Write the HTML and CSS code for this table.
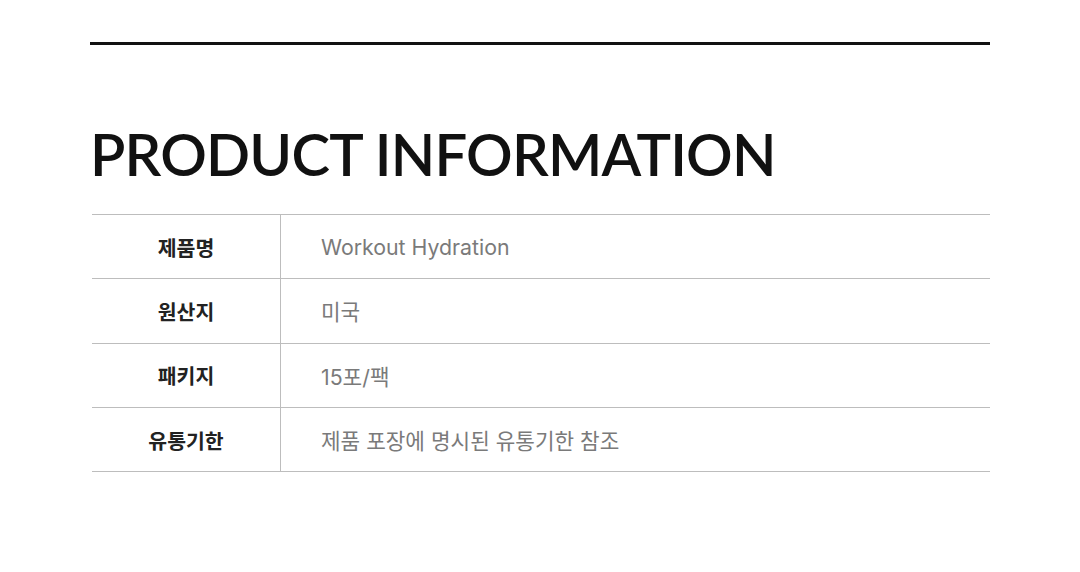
FILE: index.html
```html
<!DOCTYPE html>
<html lang="ko">
<head>
<meta charset="utf-8">
<link rel="stylesheet" href="styles.css">
</head>
<body>
<div class="page">
  <div class="topline"></div>
  <h1 class="title">PRODUCT INFORMATION</h1>
  <div class="info">
    <div class="row">
      <div class="label">제품명</div>
      <div class="value">Workout Hydration</div>
    </div>
    <div class="row">
      <div class="label">원산지</div>
      <div class="value">미국</div>
    </div>
    <div class="row">
      <div class="label">패키지</div>
      <div class="value">15포/팩</div>
    </div>
    <div class="row">
      <div class="label">유통기한</div>
      <div class="value">제품 포장에 명시된 유통기한 참조</div>
    </div>
  </div>
</div>
</body>
</html>
```
FILE: styles.css
```css
* { box-sizing: border-box; }
html, body { margin: 0; padding: 0; background: #fff; }
body { font-family: "Noto Sans CJK KR", "Noto Sans", sans-serif; }
.page { width: 900px; margin: 0 0 0 90px; padding-top: 42px; }
.topline { height: 3px; background: #111; }
.title {
  margin: 74px 0 0 0;
  font-family: Lato, "Noto Sans", sans-serif;
  font-weight: 600;
  font-size: 58px;
  line-height: 70px;
  color: #111;
  letter-spacing: -0.8px;
}
.info { margin: 25px 0 0 2px; border-top: 1px solid #bdbdbd; }
.row { display: flex; height: 64.3px; border-bottom: 1px solid #bdbdbd; }
.label {
  width: 189px;
  border-right: 1px solid #bdbdbd;
  display: flex; align-items: center; justify-content: center;
  font-size: 20.5px; font-weight: 700; color: #222;
}
.value {
  flex: 1;
  display: flex; align-items: center;
  padding-left: 40px;
  font-size: 21.3px; color: #7a7a7a;
  font-family: Inter, "Noto Sans CJK KR", sans-serif;
}
```
